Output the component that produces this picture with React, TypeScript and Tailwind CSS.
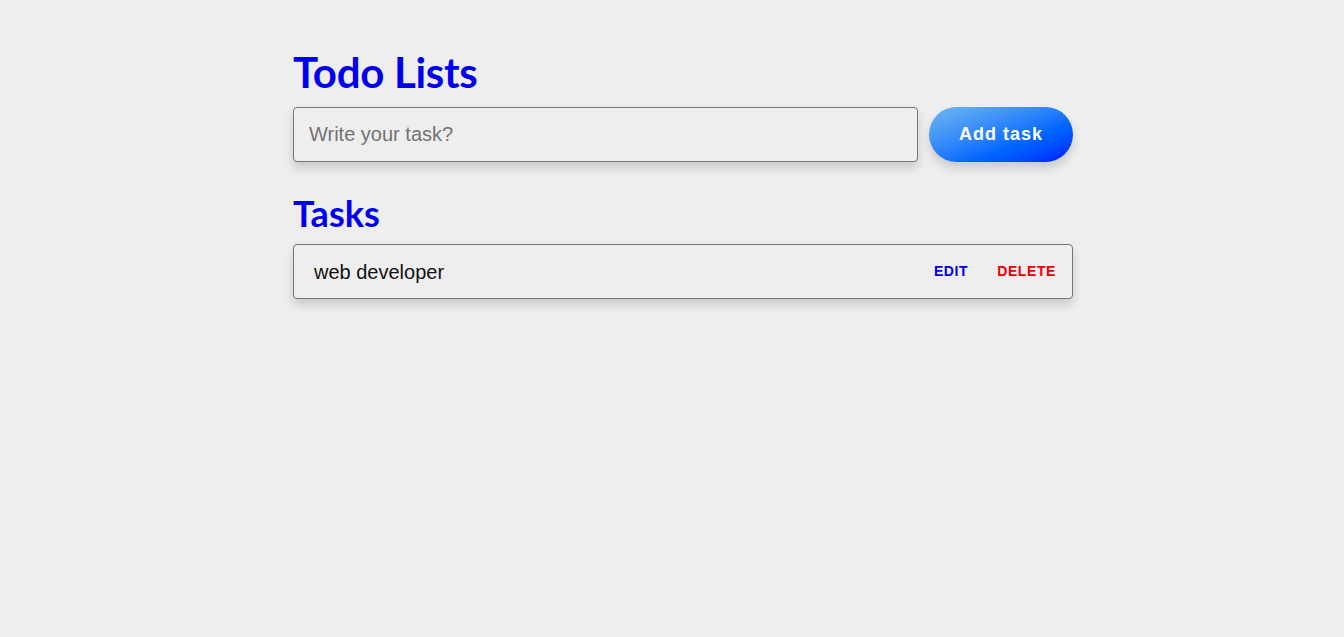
import { useState } from 'react'

interface Task {
  id: number
  text: string
}

export default function App() {
  const [tasks] = useState<Task[]>([{ id: 1, text: 'web developer' }])
  const [value, setValue] = useState('')

  return (
    <div className="min-h-screen bg-[#eeeeee] font-['Liberation_Sans',Arial,sans-serif]">
      <div className="w-[780px] ml-[293px] pt-[46px]">
        <h1 className="font-['Lato',sans-serif] font-bold text-[42px] leading-[52px] text-[#0000ee] tracking-[-0.3px]">
          Todo Lists
        </h1>
        <div className="flex gap-[11px] mt-[9px]">
          <input
            value={value}
            onChange={(e) => setValue(e.target.value)}
            placeholder="Write your task?"
            className="flex-1 h-[55px] rounded-[4px] border border-[#767676] bg-[#eeeeee] px-[15px] text-[20px] text-black placeholder:text-[#737373] outline-none shadow-[0_6px_10px_rgba(0,0,0,0.15)]"
          />
          <button className="w-[144px] h-[55px] rounded-full bg-linear-to-br from-[#70b8f0] to-[#0000ff] text-white font-bold text-[18px] tracking-[1px] shadow-[0_6px_10px_rgba(0,0,0,0.15)]">
            Add task
          </button>
        </div>

        <h2 className="font-['Lato',sans-serif] font-bold text-[36px] leading-[44px] text-[#0000ee] mt-[29px] tracking-[0px]">
          Tasks
        </h2>
        <ul className="mt-[9px]">
          {tasks.map((task) => (
            <li
              key={task.id}
              className="flex items-center justify-between h-[55px] rounded-[4px] border border-[#767676] bg-[#eeeeee] pl-[20px] pr-[16px] shadow-[0_6px_10px_rgba(0,0,0,0.15)]"
            >
              <span className="text-[20px] text-[#111111]">{task.text}</span>
              <div className="flex items-center gap-[29px] text-[14px] font-bold">
                <button className="text-[#0000ee] tracking-[0.6px]">EDIT</button>
                <button className="text-[#ee0000] tracking-[0.6px]">DELETE</button>
              </div>
            </li>
          ))}
        </ul>
      </div>
    </div>
  )
}
